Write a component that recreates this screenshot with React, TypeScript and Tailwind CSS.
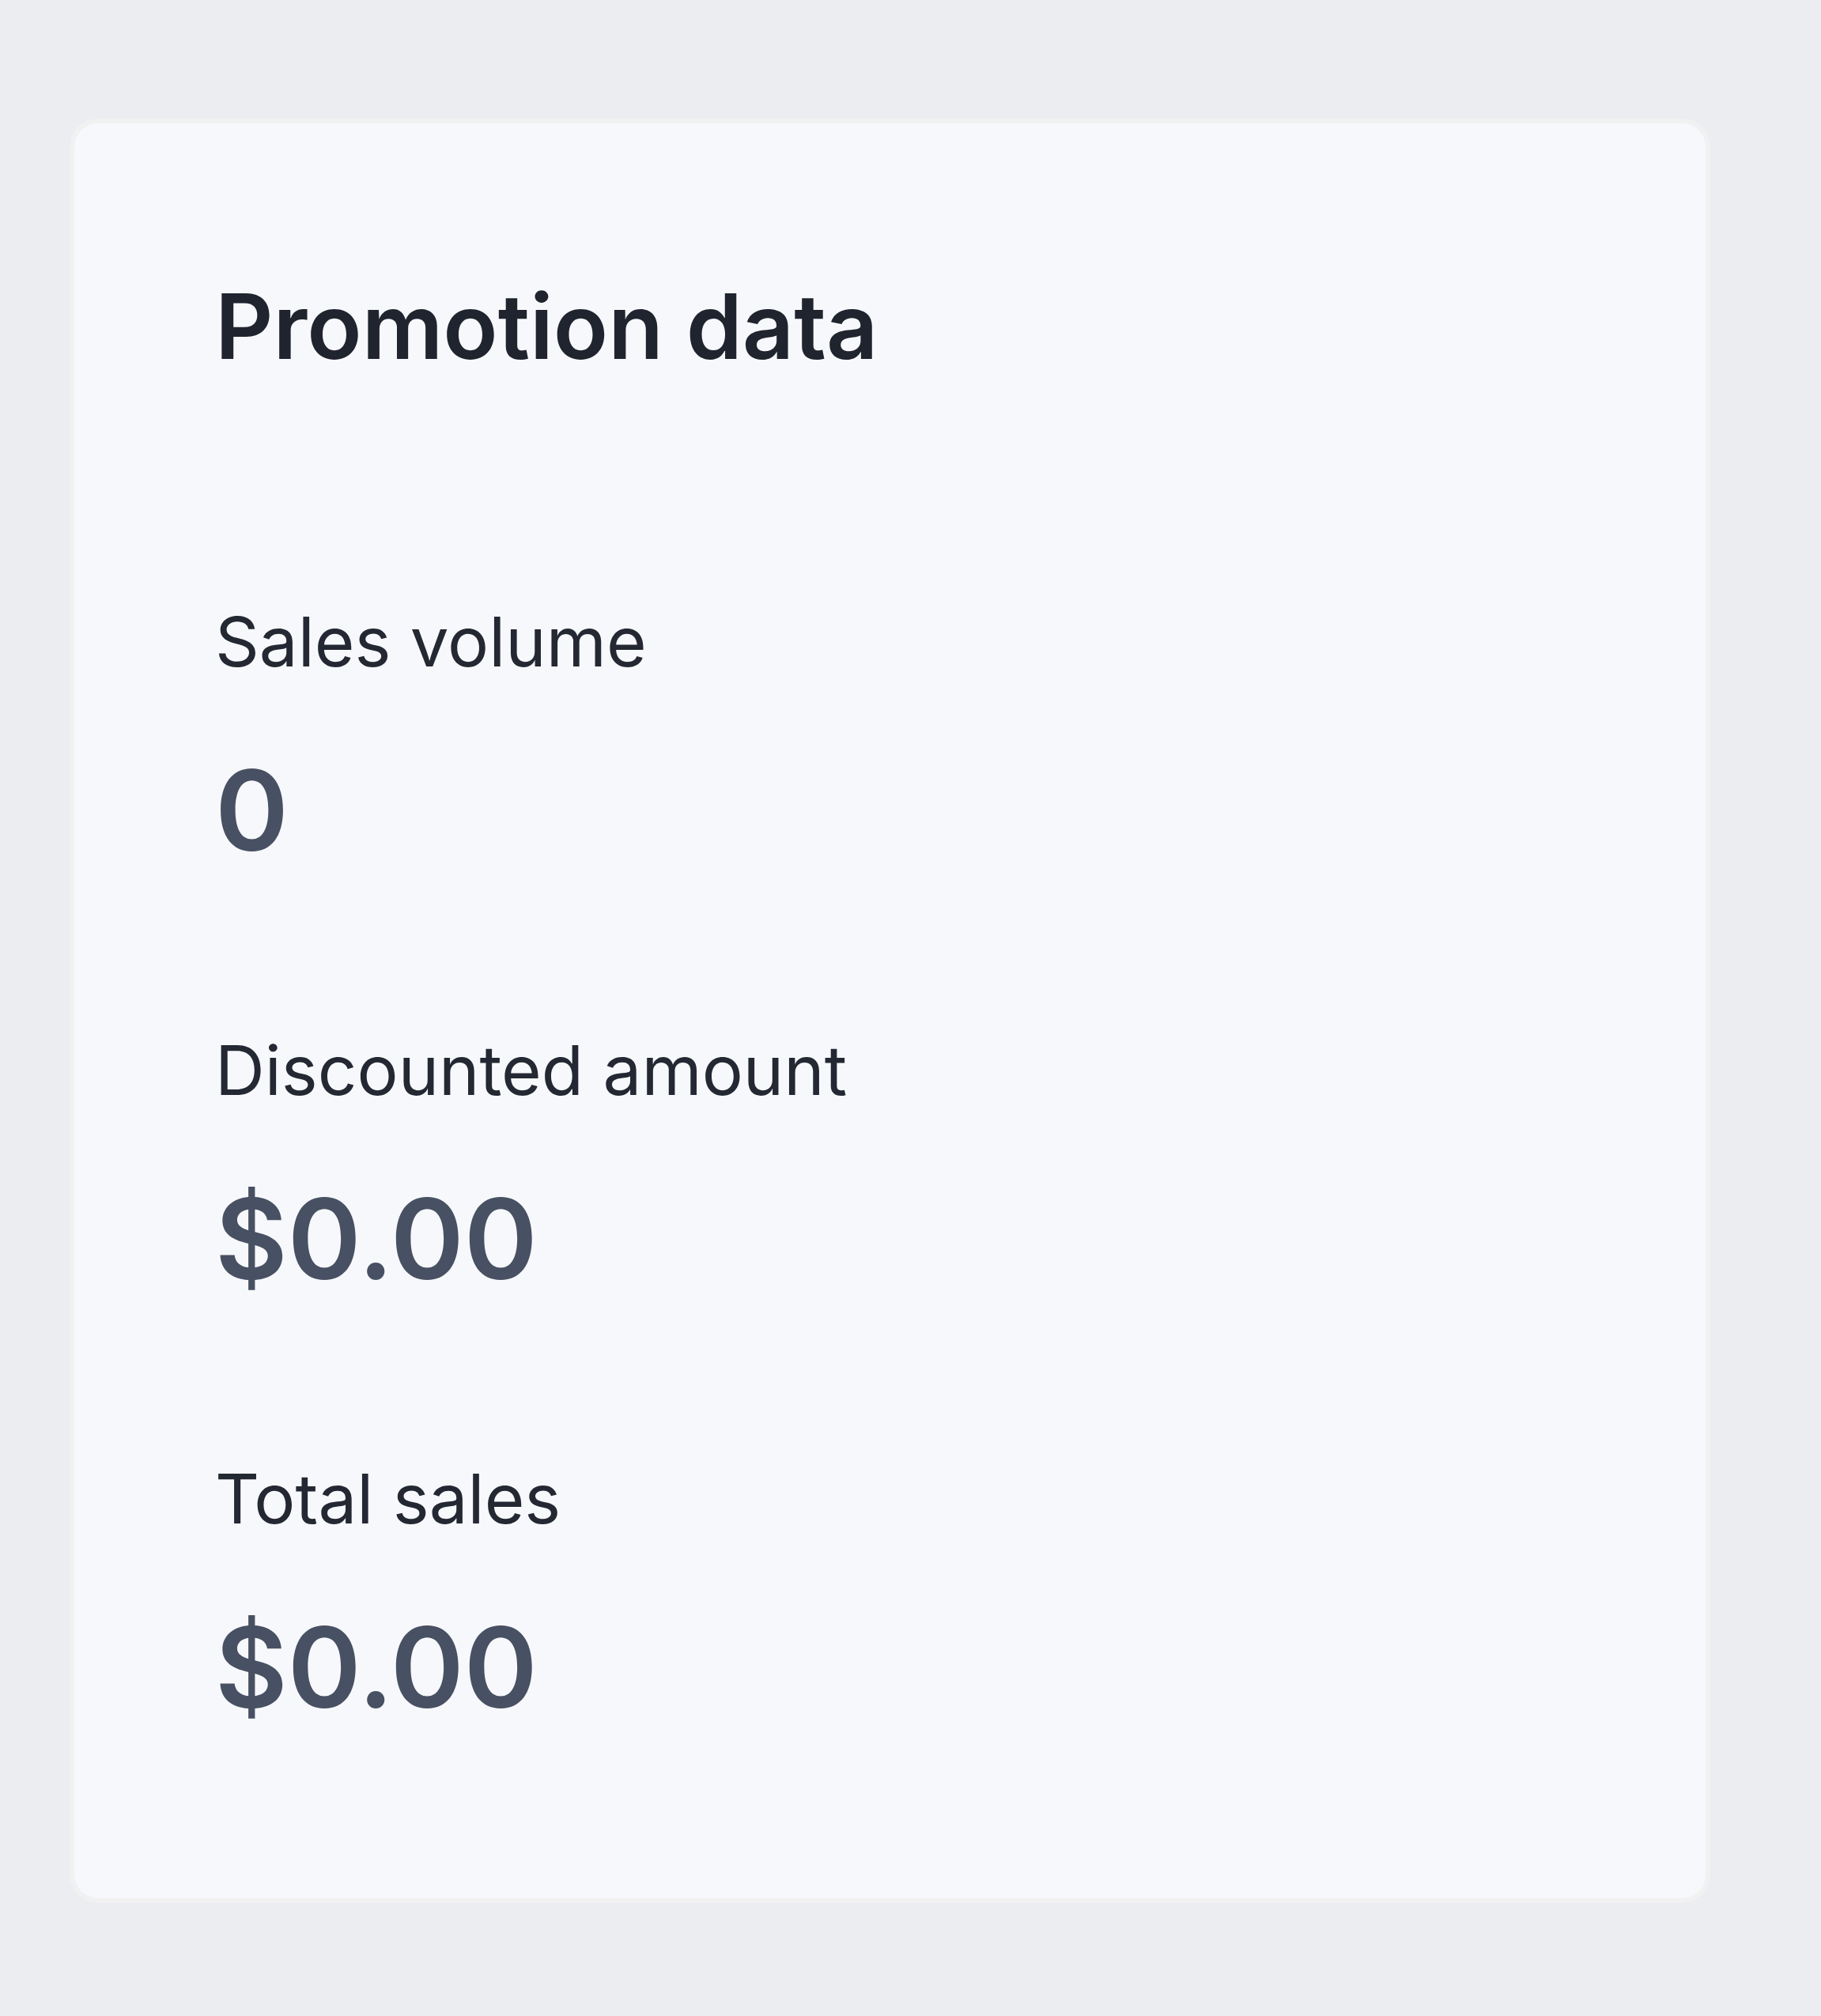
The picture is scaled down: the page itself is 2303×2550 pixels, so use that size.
const stats = [
  { label: 'Sales volume', value: '0' },
  { label: 'Discounted amount', value: '$0.00' },
  { label: 'Total sales', value: '$0.00' },
];

export default function App() {
  return (
    <div className="min-h-[2550px] w-full bg-[#ecedf0] pt-[156px] pl-[94px] font-['Inter','Noto_Sans',sans-serif]">
      <div className="w-[2063px] rounded-[30px] bg-[#f7f8fb] pt-[200px] pb-[222px] pl-[178px] shadow-[0_0_0_6px_#f1f1f2]">
        <h2 className="text-[114px] leading-[114px] font-semibold text-[#20242f]">Promotion data</h2>
        <div className="mt-[298px] flex flex-col gap-[215px]">
          {stats.map((s) => (
            <div key={s.label} className="flex flex-col gap-[99px]">
              <div className="text-[87px] leading-[87px] text-[#232833]">{s.label}</div>
              <div className="text-[141px] leading-[141px] font-semibold text-[#485063]">{s.value}</div>
            </div>
          ))}
        </div>
      </div>
    </div>
  );
}
